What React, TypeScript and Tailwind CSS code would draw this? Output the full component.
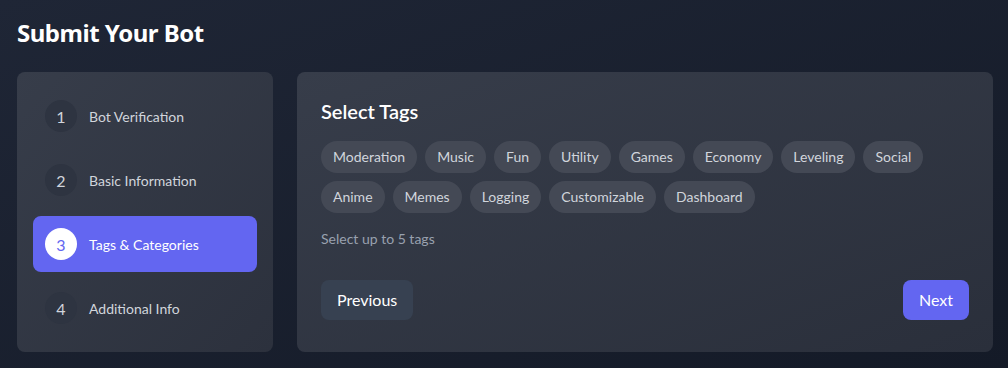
const steps = [
  { id: 1, label: "Bot Verification" },
  { id: 2, label: "Basic Information" },
  { id: 3, label: "Tags & Categories" },
  { id: 4, label: "Additional Info" },
];

const tags = [
  "Moderation",
  "Music",
  "Fun",
  "Utility",
  "Games",
  "Economy",
  "Leveling",
  "Social",
  "Anime",
  "Memes",
  "Logging",
  "Customizable",
  "Dashboard",
];

export default function App() {
  const current = 3;

  return (
    <div className="min-h-screen bg-linear-to-br from-[#1f2636] to-[#141a27] pt-[17px] pr-[15px] pb-4 pl-[17px] font-['Lato',sans-serif] text-white">
      <h1 className="mb-[23px] font-['Noto_Sans',sans-serif] text-2xl font-bold leading-8 tracking-[-0.02em]">
        Submit Your Bot
      </h1>

      <div className="flex gap-6">
        {/* steps */}
        <div className="w-64 shrink-0 rounded-lg bg-linear-to-br from-[#373d4a] to-[#2c313d] p-4">
          <div className="flex flex-col gap-2">
            {steps.map((step) => (
              <div
                key={step.id}
                className={`flex h-14 items-center rounded-lg px-3 ${
                  step.id === current ? "bg-[#6366f1]" : ""
                }`}
              >
                <span
                  className={`flex h-8 w-8 items-center justify-center rounded-full pt-px text-base ${
                    step.id === current
                      ? "bg-white text-[#6366f1]"
                      : "bg-[#2e3441] text-gray-300"
                  }`}
                >
                  {step.id}
                </span>
                <span
                  className={`ml-3 pt-px text-sm ${
                    step.id === current ? "text-white" : "text-gray-300"
                  }`}
                >
                  {step.label}
                </span>
              </div>
            ))}
          </div>
        </div>

        {/* tags */}
        <div className="flex-1 rounded-lg bg-linear-to-br from-[#373d4a] to-[#2a2f3b] px-6 pt-6 pb-6">
          <h2 className="mb-4 pt-px text-xl font-semibold leading-7">Select Tags</h2>
          <div className="flex flex-wrap gap-2">
            {tags.map((tag) => (
              <button
                key={tag}
                className="h-8 rounded-full bg-[#444955] px-3 text-sm text-gray-300"
              >
                {tag}
              </button>
            ))}
          </div>
          <p className="mt-4 text-sm text-gray-400">Select up to 5 tags</p>

          <div className="mt-[31px] flex justify-between">
            <button className="h-10 rounded-lg bg-[#374151] px-4 text-base text-white">
              Previous
            </button>
            <button className="h-10 rounded-lg bg-[#6366f1] px-4 text-base text-white">
              Next
            </button>
          </div>
        </div>
      </div>
    </div>
  );
}
